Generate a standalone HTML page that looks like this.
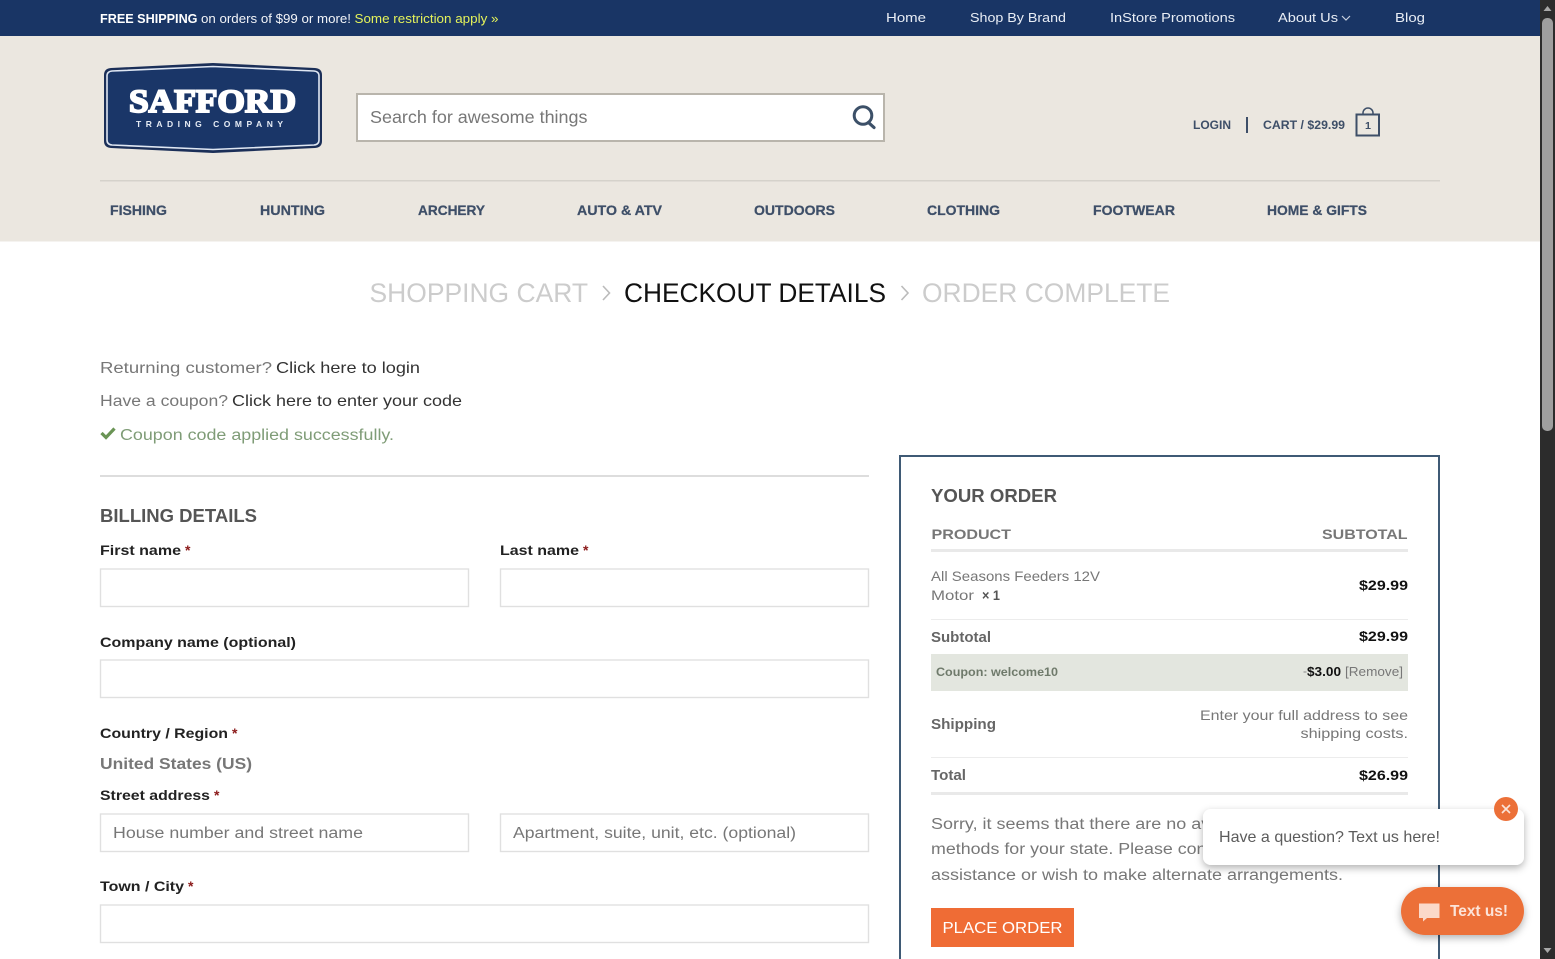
<!DOCTYPE html>
<html lang="en"><head><meta charset="utf-8"><title>Checkout – Safford Trading Company</title>
<style>
html,body{margin:0;padding:0;width:1555px;height:959px;overflow:hidden;background:#fff}
svg{display:block;position:absolute;left:0;top:0}
text{font-family:"Liberation Sans",Arial,sans-serif;white-space:pre}
.b{font-weight:700}
.nav{font-weight:700;font-size:13.5px;fill:#3e4f68;stroke:#3e4f68;stroke-width:.25}
.top{font-size:13px;fill:#e8edf5}
.lab{font-weight:700;font-size:14px;fill:#222}
.st{font-weight:700;font-size:14px;fill:#8b1a1a}
.g{font-size:15.5px;fill:#777}
.d{font-size:16px;fill:#333}
.step{font-size:27px}
.ord{font-size:14px;fill:#777}
.pr{font-weight:700;font-size:14px;fill:#111}
.bl{font-weight:700;font-size:14.5px;fill:#666}
.in{fill:#fff;stroke:#e0e0e0;stroke-width:1.4}
</style></head><body>
<svg width="1555" height="959" viewBox="0 0 1555 959" xmlns="http://www.w3.org/2000/svg">
<defs>
<filter id="s1" x="-10%" y="-30%" width="120%" height="170%"><feDropShadow dx="0" dy="3" stdDeviation="4" flood-color="#000" flood-opacity=".3"/></filter>
<filter id="s2" x="-20%" y="-30%" width="140%" height="170%"><feDropShadow dx="0" dy="3" stdDeviation="4" flood-color="#000" flood-opacity=".3"/></filter>
</defs>

<!-- header -->
<rect x="0" y="36" width="1540" height="205.500" fill="#ebe7e0"/>
<rect x="0" y="0" width="1540" height="36" fill="#193565"/>
<text x="100" y="23" class="b" font-size="12.500" fill="#fff" textLength="97.500" lengthAdjust="spacingAndGlyphs">FREE SHIPPING</text>
<text x="201" y="23" font-size="12.500" fill="#f2f4f8" textLength="150" lengthAdjust="spacingAndGlyphs">on orders of $99 or more!</text>
<text x="354.500" y="23" font-size="12.500" fill="#e4f25a" textLength="144" lengthAdjust="spacingAndGlyphs">Some restriction apply »</text>
<text x="886" y="22" class="top" textLength="40" lengthAdjust="spacingAndGlyphs">Home</text>
<text x="970" y="22" class="top" textLength="96" lengthAdjust="spacingAndGlyphs">Shop By Brand</text>
<text x="1110" y="22" class="top" textLength="125" lengthAdjust="spacingAndGlyphs">InStore Promotions</text>
<text x="1278" y="22" class="top" textLength="60" lengthAdjust="spacingAndGlyphs">About Us</text>
<path d="M1342 16l4 4 4-4" fill="none" stroke="#c8d0de" stroke-width="1.200"/>
<text x="1395" y="22" class="top" textLength="30" lengthAdjust="spacingAndGlyphs">Blog</text>

<!-- logo -->
<path d="M111 68 L213 63 L315 68 Q322 68.500 322 75 L322 141 Q322 147.500 315 148 L213 153 L111 148 Q104 147.500 104 141 L104 75 Q104 68.500 111 68Z" fill="#1b2f58"/>
<path d="M112 71 L213 66.500 L314 71 Q319 71.500 319 76 L319 140 Q319 144.500 314 145 L213 149.500 L112 145 Q107 144.500 107 140 L107 76 Q107 71.500 112 71Z" fill="#1a3668" stroke="#dfe7f3" stroke-width="1.600"/>
<text x="129" y="112" style="font-family:'Liberation Serif',serif" font-weight="700" font-size="33" fill="#fff" stroke="#fff" stroke-width="2" textLength="167" lengthAdjust="spacingAndGlyphs">SAFFORD</text>
<text x="136" y="127" class="b" font-size="8.500" fill="#e6ecf5" textLength="147" lengthAdjust="spacing">TRADING COMPANY</text>

<!-- search -->
<rect x="357" y="94" width="527" height="47" fill="#fff" stroke="#b9b5ac" stroke-width="2"/>
<text x="370" y="123" font-size="17.500" fill="#777" textLength="217.500" lengthAdjust="spacingAndGlyphs">Search for awesome things</text>
<circle cx="863" cy="115.500" r="8.800" fill="none" stroke="#3c5068" stroke-width="3"/>
<path d="M868.500 122.500l5.500 5" stroke="#3c5068" stroke-width="3.200" fill="none" stroke-linecap="round"/>

<!-- account -->
<text x="1193" y="129" class="b" font-size="11.500" fill="#3e4f68" textLength="38" lengthAdjust="spacingAndGlyphs">LOGIN</text>
<rect x="1246" y="117" width="2" height="16" fill="#3e4f68"/>
<text x="1263" y="129" class="b" font-size="11.500" fill="#3e4f68" textLength="82" lengthAdjust="spacingAndGlyphs">CART / $29.99</text>
<path d="M1363 115v-2a5 5 0 0 1 10 0v2" fill="none" stroke="#3e4f68" stroke-width="1.500"/>
<rect x="1356.500" y="114.500" width="22.500" height="21" fill="none" stroke="#3e4f68" stroke-width="2"/>
<text x="1365" y="129" class="b" font-size="10.500" fill="#3e4f68" textLength="6" lengthAdjust="spacingAndGlyphs">1</text>

<rect x="100" y="180" width="1340" height="1.500" fill="#d5d2cb"/>
<text x="110" y="215" class="nav" textLength="57" lengthAdjust="spacingAndGlyphs">FISHING</text>
<text x="260" y="215" class="nav" textLength="65" lengthAdjust="spacingAndGlyphs">HUNTING</text>
<text x="418" y="215" class="nav" textLength="67" lengthAdjust="spacingAndGlyphs">ARCHERY</text>
<text x="577" y="215" class="nav" textLength="85" lengthAdjust="spacingAndGlyphs">AUTO &amp; ATV</text>
<text x="754" y="215" class="nav" textLength="81" lengthAdjust="spacingAndGlyphs">OUTDOORS</text>
<text x="927" y="215" class="nav" textLength="73" lengthAdjust="spacingAndGlyphs">CLOTHING</text>
<text x="1093" y="215" class="nav" textLength="82" lengthAdjust="spacingAndGlyphs">FOOTWEAR</text>
<text x="1267" y="215" class="nav" textLength="100" lengthAdjust="spacingAndGlyphs">HOME &amp; GIFTS</text>

<!-- steps -->
<text x="369.500" y="302" class="step" fill="#ccc" textLength="218.500" lengthAdjust="spacingAndGlyphs">SHOPPING CART</text>
<path d="M603 286l6.500 7-6.500 7" fill="none" stroke="#bbb" stroke-width="1.600"/>
<text x="624" y="302" class="step" fill="#111" textLength="262" lengthAdjust="spacingAndGlyphs">CHECKOUT DETAILS</text>
<path d="M901.500 286l6.500 7-6.500 7" fill="none" stroke="#bbb" stroke-width="1.600"/>
<text x="922" y="302" class="step" fill="#ccc" textLength="248" lengthAdjust="spacingAndGlyphs">ORDER COMPLETE</text>

<!-- notices -->
<text x="100" y="373" class="g" textLength="172" lengthAdjust="spacingAndGlyphs">Returning customer?</text>
<text x="276" y="373" class="d" textLength="144" lengthAdjust="spacingAndGlyphs">Click here to login</text>
<text x="100" y="406" class="g" textLength="128" lengthAdjust="spacingAndGlyphs">Have a coupon?</text>
<text x="232" y="406" class="d" textLength="230" lengthAdjust="spacingAndGlyphs">Click here to enter your code</text>
<path d="M101.500 433l4.500 4.500 8.500-9" fill="none" stroke="#6a9455" stroke-width="3.200"/>
<text x="120" y="440" class="g" style="fill:#7f9c77" textLength="274" lengthAdjust="spacingAndGlyphs">Coupon code applied successfully.</text>

<rect x="100" y="475" width="769" height="2" fill="#ddd"/>

<!-- billing -->
<text x="100" y="522" class="b" font-size="18" fill="#555" textLength="157" lengthAdjust="spacingAndGlyphs">BILLING DETAILS</text>
<text x="100" y="555" class="lab" textLength="81" lengthAdjust="spacingAndGlyphs">First name</text>
<text x="185" y="555" class="st">*</text>
<text x="500" y="555" class="lab" textLength="79" lengthAdjust="spacingAndGlyphs">Last name</text>
<text x="583" y="555" class="st">*</text>
<rect x="100.500" y="569" width="368" height="37.500" class="in"/>
<rect x="500.500" y="569" width="368" height="37.500" class="in"/>
<text x="100" y="647" class="lab" textLength="196" lengthAdjust="spacingAndGlyphs">Company name (optional)</text>
<rect x="100.500" y="660" width="768" height="37.500" class="in"/>
<text x="100" y="738" class="lab" textLength="128" lengthAdjust="spacingAndGlyphs">Country / Region</text>
<text x="232" y="738" class="st">*</text>
<text x="100" y="769" class="b" font-size="16" fill="#777" textLength="152" lengthAdjust="spacingAndGlyphs">United States (US)</text>
<text x="100" y="800" class="lab" textLength="110" lengthAdjust="spacingAndGlyphs">Street address</text>
<text x="214" y="800" class="st">*</text>
<rect x="100.500" y="814" width="368" height="37.500" class="in"/>
<text x="113" y="838" class="g" textLength="250" lengthAdjust="spacingAndGlyphs">House number and street name</text>
<rect x="500.500" y="814" width="368" height="37.500" class="in"/>
<text x="513" y="838" class="g" textLength="283" lengthAdjust="spacingAndGlyphs">Apartment, suite, unit, etc. (optional)</text>
<text x="100" y="891" class="lab" textLength="84" lengthAdjust="spacingAndGlyphs">Town / City</text>
<text x="188" y="891" class="st">*</text>
<rect x="100.500" y="905" width="768" height="37.500" class="in"/>

<!-- order box -->
<rect x="900" y="456" width="539" height="520" fill="#fff" stroke="#3f5a75" stroke-width="2"/>
<text x="931" y="502" class="b" font-size="18" fill="#555" textLength="126" lengthAdjust="spacingAndGlyphs">YOUR ORDER</text>
<text x="931.500" y="539" class="b" font-size="14" fill="#777" textLength="79.500" lengthAdjust="spacingAndGlyphs">PRODUCT</text>
<text x="1322" y="539" class="b" font-size="14" fill="#777" textLength="85.500" lengthAdjust="spacingAndGlyphs">SUBTOTAL</text>
<rect x="931" y="549" width="477" height="3" fill="#e9e9e9"/>
<text x="931" y="581" class="ord" textLength="169" lengthAdjust="spacingAndGlyphs">All Seasons Feeders 12V</text>
<text x="931" y="600" class="ord" textLength="43" lengthAdjust="spacingAndGlyphs">Motor</text>
<text x="982" y="600" class="b" font-size="14" fill="#555" textLength="18" lengthAdjust="spacingAndGlyphs">× 1</text>
<text x="1359" y="590" class="pr" textLength="49" lengthAdjust="spacingAndGlyphs">$29.99</text>
<rect x="931" y="619" width="477" height="1" fill="#ececec"/>
<text x="931" y="642" class="bl" textLength="60" lengthAdjust="spacingAndGlyphs">Subtotal</text>
<text x="1359" y="641" class="pr" textLength="49" lengthAdjust="spacingAndGlyphs">$29.99</text>
<rect x="931" y="654" width="477" height="37" fill="#e3e6df"/>
<text x="936" y="676" class="b" font-size="12" fill="#6f7a6b" textLength="122" lengthAdjust="spacingAndGlyphs">Coupon: welcome10</text>
<rect x="1303.500" y="671.500" width="3" height="1" fill="#888"/>
<text x="1307" y="676" class="b" font-size="12.500" fill="#111" textLength="34" lengthAdjust="spacingAndGlyphs">$3.00</text>
<text x="1345" y="676" font-size="12.500" fill="#777" textLength="58" lengthAdjust="spacingAndGlyphs">[Remove]</text>
<text x="931" y="729" class="bl" textLength="65" lengthAdjust="spacingAndGlyphs">Shipping</text>
<text x="1200" y="720" class="ord" textLength="208" lengthAdjust="spacingAndGlyphs">Enter your full address to see</text>
<text x="1300.500" y="738" class="ord" textLength="107.500" lengthAdjust="spacingAndGlyphs">shipping costs.</text>
<rect x="931" y="757" width="477" height="1" fill="#ececec"/>
<text x="931" y="780" class="bl" textLength="35" lengthAdjust="spacingAndGlyphs">Total</text>
<text x="1359" y="780" class="pr" textLength="49" lengthAdjust="spacingAndGlyphs">$26.99</text>
<rect x="931" y="792" width="477" height="3" fill="#e9e9e9"/>
<text x="931" y="829" class="g" textLength="405" lengthAdjust="spacingAndGlyphs">Sorry, it seems that there are no available payment</text>
<text x="931" y="854" class="g" textLength="436" lengthAdjust="spacingAndGlyphs">methods for your state. Please contact us if you require</text>
<text x="931" y="880" class="g" textLength="412" lengthAdjust="spacingAndGlyphs">assistance or wish to make alternate arrangements.</text>
<rect x="931" y="908" width="143" height="39" fill="#ef6c35"/>
<text x="942.500" y="933" font-size="16" fill="#fff" textLength="120" lengthAdjust="spacingAndGlyphs">PLACE ORDER</text>

<!-- chat widget -->
<rect x="1203" y="809" width="321" height="56" rx="8" fill="#fff" filter="url(#s1)"/>
<text x="1219" y="842" font-size="16" fill="#5c5c5c" textLength="221" lengthAdjust="spacingAndGlyphs">Have a question? Text us here!</text>
<circle cx="1506" cy="809" r="12" fill="#ec7038"/>
<path d="M1502 805l8 8M1510 805l-8 8" stroke="#fbe3d8" stroke-width="1.700"/>
<rect x="1401" y="887" width="123" height="48" rx="24" fill="#ec7038" filter="url(#s2)"/>
<path d="M1419 903.500h20.500v14.500h-12.500l-4 3.500v-3.500h-4z" fill="#fbd9c9"/>
<text x="1450" y="916" class="b" font-size="16" fill="#fce4d9" textLength="58" lengthAdjust="spacingAndGlyphs">Text us!</text>

<!-- scrollbar -->
<rect x="1540" y="0" width="15" height="959" fill="#2c2c2c"/>
<rect x="1542" y="18" width="11" height="413" rx="5" fill="#9f9f9f"/>
<path d="M1543.500 11l4-5 4 5z" fill="#a8a8a8"/>
<path d="M1543.500 948l4 5 4-5z" fill="#a8a8a8"/>
</svg>
</body></html>
